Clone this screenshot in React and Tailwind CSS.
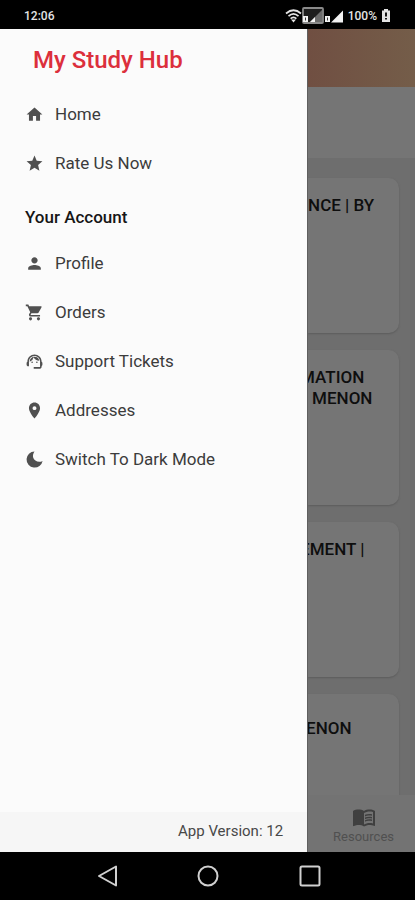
import {
  MdHome,
  MdStar,
  MdPerson,
  MdShoppingCart,
  MdSupportAgent,
  MdLocationOn,
  MdMenuBook,
} from "react-icons/md";

const MoonIcon = ({ className }) => (
  <svg viewBox="0 0 20 20" fill="currentColor" className={className} aria-hidden="true">
    <path d="M10 1.500A8.500 8.500 0 1 0 18.500 11.500C15 13.500 9.500 12 8.600 8C8 5.500 8.600 3.500 10 1.500z" />
  </svg>
);

const mainLinks = [
  { label: "Home", icon: MdHome },
  { label: "Rate Us Now", icon: MdStar },
];

const accountLinks = [
  { label: "Profile", icon: MdPerson },
  { label: "Orders", icon: MdShoppingCart },
  { label: "Support Tickets", icon: MdSupportAgent },
  { label: "Addresses", icon: MdLocationOn },
  { label: "Switch To Dark Mode", icon: MoonIcon },
];

const courses = [
  { lines: [{ text: "NCE | BY", className: "" }], className: "pt-[17px]" },
  {
    lines: [
      { text: "MATION", className: "-ml-2" },
      { text: "MENON", className: "pl-1" },
    ],
    className: "pt-[17px]",
  },
  { lines: [{ text: "EMENT |", className: "-ml-2" }], className: "pt-[17px]" },
  { lines: [{ text: "ENON", className: "-ml-0.5" }], className: "pt-6" },
];

const StatusIcons = () => (
  <svg width="59" height="18" viewBox="0 0 59 18" aria-hidden="true">
    {/* wifi */}
    <g fill="none" stroke="#e4e4e4" strokeWidth="1.7">
      <path d="M1 6.500 Q8.500 0 16 6.500" />
      <path d="M3.500 9.200 Q8.500 4.600 13.500 9.200" />
      <path d="M5.600 11.700 Q8.500 9 11.400 11.700" />
    </g>
    <path d="M6 12.500h5L8.500 15.500z" fill="#e4e4e4" />
    {/* first sim */}
    <rect x="18" y="1" width="20" height="15" rx="1" fill="#1c1c1c" stroke="#8a8a8a" strokeWidth="1.8" />
    <path d="M25 15 37 3v12z" fill="#6b6b6b" />
    <path d="M25 15l5-5v5z" fill="#f2f2f2" />
    <rect x="18" y="9" width="5" height="6" fill="#f2f2f2" />
    <path d="M20.500 10.500v3" stroke="#333" />
    {/* second sim */}
    <rect x="40" y="9" width="5" height="6" fill="#f2f2f2" />
    <path d="M42.500 10.500v3" stroke="#333" />
    <path d="M46 15.500 58 3.500v12z" fill="#f2f2f2" />
  </svg>
);

const StatusBar = () => (
  <header className="flex h-[29px] items-center justify-between bg-black px-6 pt-0.5 text-xs font-medium text-[#e4e4e4]">
    <span>12:06</span>
    <div className="flex items-center">
      <StatusIcons />
      <span className="ml-1">100%</span>
      <svg className="ml-1" width="10" height="13" viewBox="0 0 10 13" aria-hidden="true">
        <path d="M3 0h4v1.500h2V13H1V1.500h2z" fill="#e4e4e4" />
        <path d="M5 3.500v4M5 9v1.500" stroke="#000" strokeWidth="1.800" />
      </svg>
    </div>
  </header>
);

const DrawerItem = ({ icon: Icon, label }) => (
  <li>
    <button type="button" className="flex h-12 w-full items-center gap-[11px] pl-[25px] text-left text-[17px] leading-6 text-[#3c3c3c]">
      <Icon className="size-[19px] shrink-0 text-[#505050]" />
      {label}
    </button>
  </li>
);

const DrawerList = ({ links }) => (
  <ul className="flex flex-col gap-px">
    {links.map((link) => (
      <DrawerItem key={link.label} {...link} />
    ))}
  </ul>
);

const Drawer = () => (
  <aside className="flex w-[74%] shrink-0 flex-col bg-[#fbfbfb]">
    <h1 className="pl-[33px] pt-[13px] text-2xl leading-9 font-medium text-[#dc2f3c]">My Study Hub</h1>
    <nav className="flex-1 pt-3">
      <DrawerList links={mainLinks} />
      <h2 className="pl-[25px] pt-[18px] pb-2.5 text-[17px] leading-6 font-medium text-[#161616]">Your Account</h2>
      <DrawerList links={accountLinks} />
    </nav>
    <p className="bg-[#f6f6f6] pt-[9px] pb-[11px] pr-6 text-right text-[15px] leading-5 text-[#484848]">App Version: 12</p>
  </aside>
);

const CourseCard = ({ lines, className }) => (
  <article className={`mr-4 h-[155px] shrink-0 rounded-r-[10px] bg-[#757575] shadow-[0_1px_2px_#5c5c5c] ${className}`}>
    <h3 className="text-[17px] leading-[21px] font-medium whitespace-nowrap text-[#0e0e0e]">
      {lines.map((line) => (
        <span key={line.text} className={`block ${line.className}`}>
          {line.text}
        </span>
      ))}
    </h3>
  </article>
);

const DimmedPage = () => (
  <main className="flex min-w-0 flex-1 flex-col overflow-hidden border-l border-[#5f5f5f] bg-[#6e6e6e]">
    <div className="h-[58px] shrink-0 bg-linear-to-r from-[#704f42] to-[#745d49] shadow-[0_1px_3px_#505050]" />
    <div className="h-[71px] shrink-0 bg-[#757575]" />
    <div className="flex h-0 flex-auto flex-col gap-[17px] overflow-hidden pt-5">
      {courses.map((course) => (
        <CourseCard key={course.lines[0].text} {...course} />
      ))}
    </div>
    <a href="#resources" className="flex h-[57px] shrink-0 flex-col items-center justify-center bg-[#737373] pl-1 pt-0.5 text-[13px] leading-4 text-[#505050]">
      <MdMenuBook className="size-6 text-[#3f3f3f]" />
      Resources
    </a>
  </main>
);

const SystemNav = () => (
  <footer className="bg-black">
    <div className="mx-auto grid h-12 w-[74%] grid-cols-3 place-items-center pl-0.5 text-[#d0d0d0]">
      <button type="button" aria-label="Back">
        <svg width="24" height="24" viewBox="0 0 24 24" fill="none" stroke="currentColor" strokeWidth="2" strokeLinejoin="round">
          <path d="M21 2.500v19L4 12z" />
        </svg>
      </button>
      <button type="button" aria-label="Home screen">
        <svg width="24" height="24" viewBox="0 0 24 24" fill="none" stroke="currentColor" strokeWidth="2">
          <circle cx="12" cy="12" r="9.500" />
        </svg>
      </button>
      <button type="button" aria-label="Recent apps">
        <svg width="24" height="24" viewBox="0 0 24 24" fill="none" stroke="currentColor" strokeWidth="2">
          <rect x="2.500" y="2.500" width="19" height="19" rx="1.500" />
        </svg>
      </button>
    </div>
  </footer>
);

const App = () => {
  return (
    <div className="flex min-h-screen flex-col bg-black font-['Roboto',sans-serif]">
      <StatusBar />
      <div className="flex flex-1">
        <Drawer />
        <DimmedPage />
      </div>
      <SystemNav />
    </div>
  );
};

export default App;
